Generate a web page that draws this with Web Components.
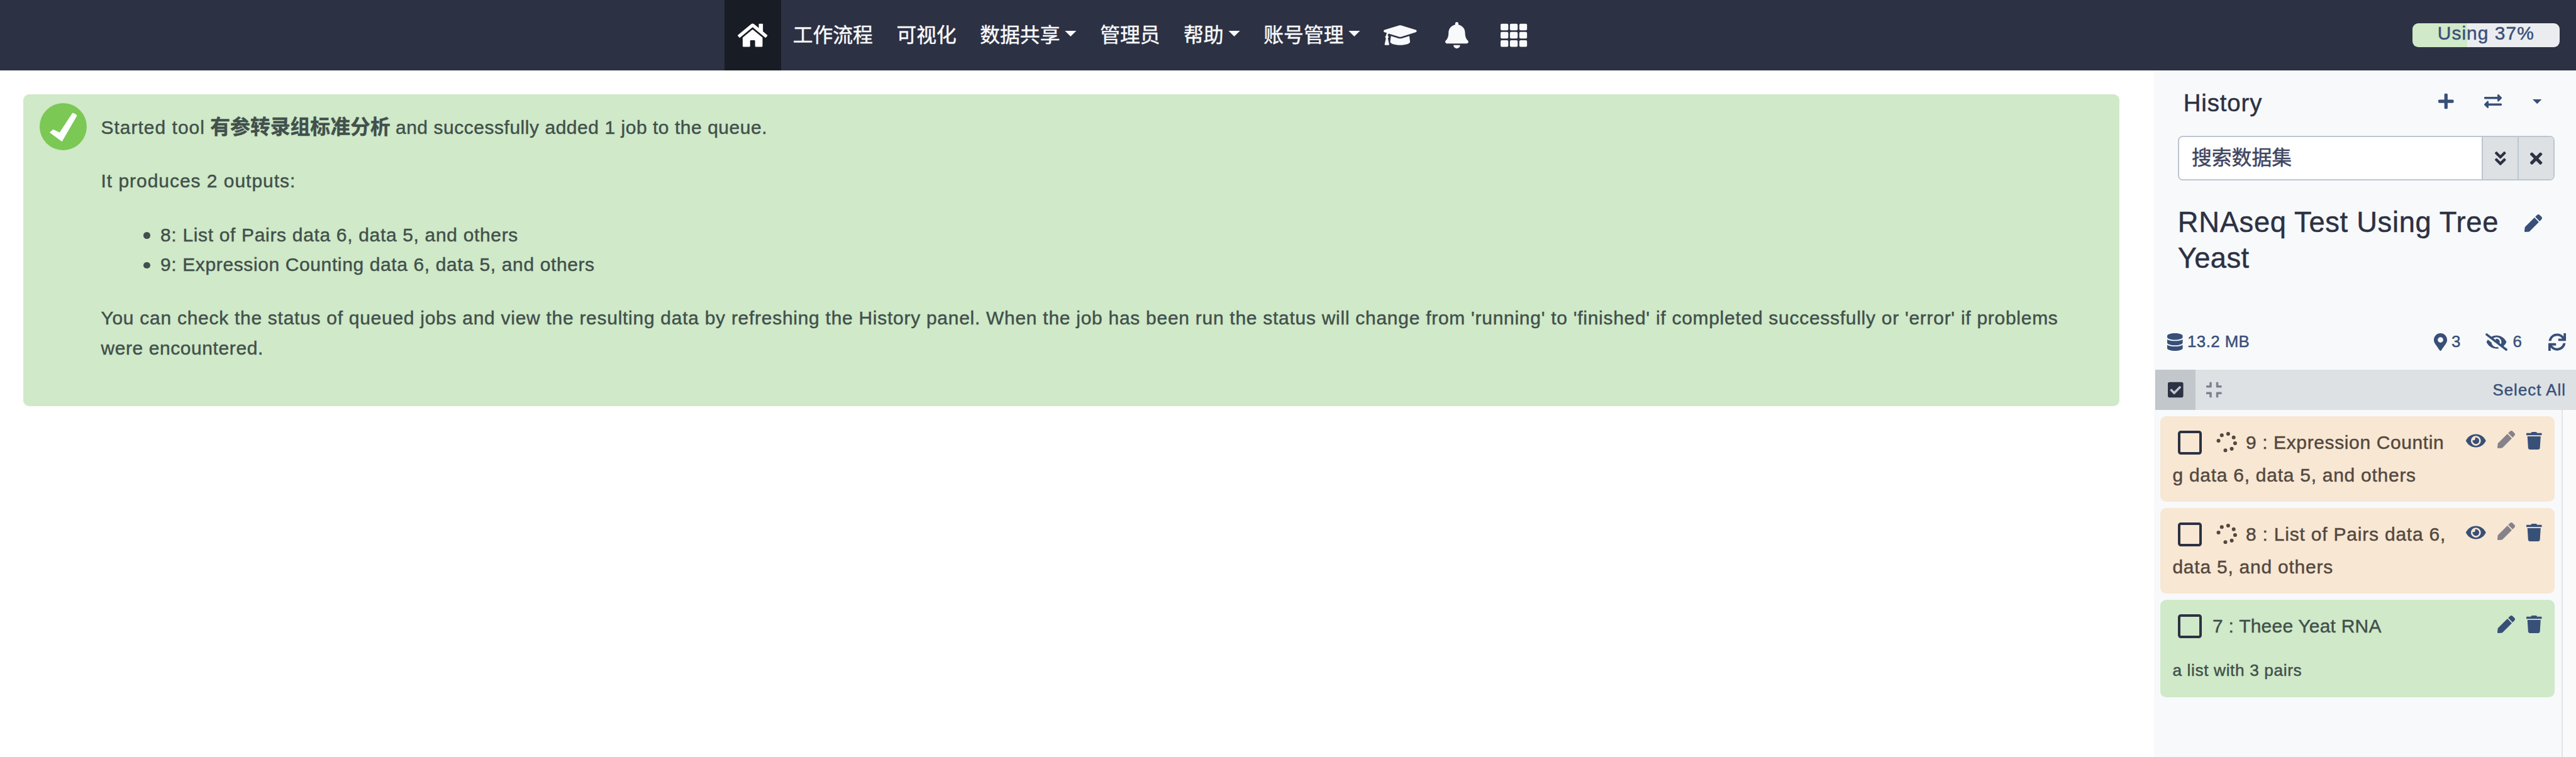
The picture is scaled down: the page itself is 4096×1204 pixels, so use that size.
<!DOCTYPE html>
<html lang="zh-CN">
<head>
<meta charset="utf-8">
<title>Galaxy</title>
<style>
/* 1rem = 100 design pixels */
html{font-size:calc(100vw / 43.76);height:100%}
body{margin:0;height:100%;overflow:hidden;background:#fff;font-family:"Liberation Sans","Noto Sans CJK SC",sans-serif;-webkit-text-stroke:.005rem currentColor}
</style>
</head>
<body>
<galaxy-app></galaxy-app>
<script>
const ICONS = {
home:[576,'M280.37 148.26L96 300.11V464a16 16 0 0 0 16 16l112.06-.29a16 16 0 0 0 15.92-16V368a16 16 0 0 1 16-16h64a16 16 0 0 1 16 16v95.64a16 16 0 0 0 16 16.05L464 480a16 16 0 0 0 16-16V300L295.67 148.26a12.19 12.19 0 0 0-15.3 0zM571.6 251.47L488 182.56V44.05a12 12 0 0 0-12-12h-56a12 12 0 0 0-12 12v72.61L318.47 43a48 48 0 0 0-61 0L4.34 251.47a12 12 0 0 0-1.6 16.9l25.5 31A12 12 0 0 0 45.15 301l235.22-193.74a12.19 12.19 0 0 1 15.3 0L530.9 301a12 12 0 0 0 16.9-1.6l25.5-31a12 12 0 0 0-1.7-16.93z'],
bell:[448,'M224 512c35.32 0 63.97-28.65 63.97-64H160.03c0 35.35 28.65 64 63.97 64zm215.39-149.71c-19.32-20.76-55.47-51.99-55.47-154.29 0-77.7-54.48-139.9-127.94-155.16V32c0-17.67-14.32-32-31.98-32s-31.98 14.33-31.98 32v20.84C118.56 68.1 64.08 130.3 64.08 208c0 102.3-36.15 133.53-55.47 154.29-6 6.45-8.66 14.16-8.61 21.71.11 16.4 12.98 32 32.1 32h383.8c19.12 0 32-15.6 32.1-32 .05-7.55-2.61-15.27-8.61-21.71z'],
cap:[640,'M622.34 153.2L343.4 67.5c-15.2-4.67-31.6-4.67-46.79 0L17.66 153.2c-23.54 7.23-23.54 38.36 0 45.59l48.63 14.94c-10.67 13.19-17.23 29.28-17.88 46.9C38.78 266.15 32 276.11 32 288c0 10.78 5.68 19.85 13.86 25.65L20.33 428.53C18.11 438.52 25.71 448 35.94 448h56.11c10.24 0 17.84-9.48 15.62-19.47L82.14 313.65C90.32 307.85 96 298.78 96 288c0-11.57-6.47-21.25-15.66-26.87.76-15.02 8.44-28.3 20.69-36.72L296.6 284.5c9.06 2.78 26.44 6.25 46.79 0l278.95-85.7c23.55-7.24 23.55-38.36 0-45.6zM352.79 315.09c-28.53 8.76-52.84 3.92-65.59 0l-145.02-44.55L128 384c0 35.35 85.96 64 192 64s192-28.65 192-64l-14.18-113.47-145.03 44.56z'],
grid:[512,[0,181.33,362.66].flatMap(x=>[32,192,352].map(y=>`M${x+24} ${y}h101.33a24 24 0 0 1 24 24v80a24 24 0 0 1-24 24h-101.33a24 24 0 0 1-24-24v-80a24 24 0 0 1 24-24z`)).join('')],
plus:[448,'M416 208H272V64c0-17.67-14.33-32-32-32h-32c-17.67 0-32 14.33-32 32v144H32c-17.67 0-32 14.33-32 32v32c0 17.67 14.33 32 32 32h144v144c0 17.67 14.33 32 32 32h32c17.67 0 32-14.33 32-32V304h144c17.67 0 32-14.33 32-32v-32c0-17.67-14.33-32-32-32z'],
exchange:[512,'M0 168v-16c0-13.255 10.745-24 24-24h360V80c0-21.367 25.899-32.042 40.971-16.971l80 80c9.372 9.373 9.372 24.569 0 33.941l-80 80C409.956 271.982 384 261.456 384 240v-48H24c-13.255 0-24-10.745-24-24zm488 152H128v-48c0-21.314-25.862-32.08-40.971-16.971l-80 80c-9.372 9.373-9.372 24.569 0 33.941l80 80C102.057 463.997 128 453.437 128 432v-48h360c13.255 0 24-10.745 24-24v-16c0-13.255-10.745-24-24-24z'],
down2:[320,'M143 256.3L7 120.3c-9.4-9.4-9.4-24.6 0-33.9l22.6-22.6c9.4-9.4 24.6-9.4 33.9 0l96.4 96.4 96.4-96.4c9.4-9.4 24.6-9.4 33.9 0L313 86.3c9.4 9.4 9.4 24.6 0 33.9l-136 136c-9.4 9.5-24.6 9.5-34 .1zm34 192l136-136c9.4-9.4 9.4-24.6 0-33.9l-22.6-22.6c-9.4-9.4-24.6-9.4-33.9 0L160 352.1l-96.4-96.4c-9.4-9.4-24.6-9.4-33.9 0L7 278.3c-9.4 9.4-9.4 24.6 0 33.9l136 136c9.4 9.5 24.6 9.5 34 .1z'],
times:[352,'M242.72 256l100.07-100.07c12.28-12.28 12.28-32.19 0-44.48l-22.24-22.24c-12.28-12.28-32.19-12.28-44.48 0L176 189.28 75.93 89.21c-12.28-12.28-32.19-12.28-44.48 0L9.21 111.45c-12.28 12.28-12.28 32.19 0 44.48L109.28 256 9.21 356.07c-12.28 12.28-12.28 32.19 0 44.48l22.24 22.24c12.28 12.28 32.2 12.28 44.48 0L176 322.72l100.07 100.07c12.28 12.28 32.2 12.28 44.48 0l22.24-22.24c12.28-12.28 12.28-32.19 0-44.48L242.72 256z'],
pen:[512,'M290.74 93.24l128.02 128.02-277.99 277.99-114.14 12.6C11.35 513.54-1.56 500.62.14 485.34l12.7-114.22 277.9-277.88zm207.2-19.06l-60.11-60.11c-18.75-18.75-49.16-18.75-67.91 0l-56.55 56.55 128.02 128.02 56.55-56.55c18.75-18.76 18.75-49.16 0-67.91z'],
database:[448,'M448 73.143v45.714C448 159.143 347.667 192 224 192S0 159.143 0 118.857V73.143C0 32.857 100.333 0 224 0s224 32.857 224 73.143zM448 176v102.857C448 319.143 347.667 352 224 352S0 319.143 0 278.857V176c48.125 33.143 136.208 48.572 224 48.572S399.874 209.143 448 176zm0 160v102.857C448 479.143 347.667 512 224 512S0 479.143 0 438.857V336c48.125 33.143 136.208 48.572 224 48.572S399.874 369.143 448 336z'],
pin:[384,'M172.268 501.67C26.97 291.031 0 269.413 0 192 0 85.961 85.961 0 192 0s192 85.961 192 192c0 77.413-26.97 99.031-172.268 309.67-9.535 13.774-29.93 13.773-39.464 0zM192 272c44.183 0 80-35.817 80-80s-35.817-80-80-80-80 35.817-80 80 35.817 80 80 80z'],
eyeslash:[640,'M320 400c-75.85 0-137.25-58.71-142.9-133.11L72.2 185.82c-13.79 17.3-26.48 35.59-36.72 55.59a32.35 32.35 0 0 0 0 29.19C89.71 376.41 197.07 448 320 448c26.91 0 52.87-4 77.89-10.46L346 397.39a144.13 144.13 0 0 1-26 2.61zm313.82 58.1l-110.55-85.44a331.25 331.25 0 0 0 81.25-102.07 32.35 32.35 0 0 0 0-29.19C550.29 135.59 442.93 64 320 64a308.15 308.15 0 0 0-147.32 37.7L45.46 3.37A16 16 0 0 0 23 6.18L3.37 31.45A16 16 0 0 0 6.18 53.9l588.36 454.73a16 16 0 0 0 22.46-2.81l19.64-25.27a16 16 0 0 0-2.82-22.45zm-183.72-142l-39.3-30.38A94.75 94.75 0 0 0 416 256a94.76 94.76 0 0 0-121.31-92.21A47.65 47.65 0 0 1 304 192a46.64 46.64 0 0 1-1.54 10l-73.61-56.89A142.31 142.31 0 0 1 320 112a143.92 143.92 0 0 1 144 144c0 21.63-5.29 41.79-13.9 60.11z'],
eye:[576,'M572.52 241.4C518.29 135.59 410.93 64 288 64S57.68 135.64 3.48 241.41a32.35 32.35 0 0 0 0 29.19C57.71 376.41 165.07 448 288 448s230.32-71.64 284.52-177.41a32.35 32.35 0 0 0 0-29.19zM288 400a144 144 0 1 1 144-144 143.93 143.93 0 0 1-144 144zm0-240a95.31 95.31 0 0 0-25.31 3.79 47.85 47.85 0 0 1-66.9 66.9A95.78 95.78 0 1 0 288 160z'],
sync:[512,'M440.65 12.57l4 82.77A247.16 247.16 0 0 0 255.83 8C134.73 8 33.91 94.92 12.29 209.82A12 12 0 0 0 24.09 224h49.05a12 12 0 0 0 11.67-9.26 175.91 175.91 0 0 1 317-56.94l-101.46-4.86a12 12 0 0 0-12.57 12v47.41a12 12 0 0 0 12 12H500a12 12 0 0 0 12-12V12a12 12 0 0 0-12-12h-47.37a12 12 0 0 0-11.98 12.57zM255.83 432a175.61 175.61 0 0 1-146-77.8l101.8 4.87a12 12 0 0 0 12.57-12v-47.4a12 12 0 0 0-12-12H12a12 12 0 0 0-12 12V500a12 12 0 0 0 12 12h47.35a12 12 0 0 0 12-12.6l-4.15-82.57A247.17 247.17 0 0 0 255.83 504c121.11 0 221.93-86.92 243.55-201.82a12 12 0 0 0-11.8-14.18h-49.05a12 12 0 0 0-11.67 9.26A175.86 175.86 0 0 1 255.83 432z'],
check:[448,'M400 480H48c-26.51 0-48-21.49-48-48V80c0-26.51 21.49-48 48-48h352c26.51 0 48 21.49 48 48v352c0 26.51-21.49 48-48 48zm-204.686-98.059l184-184c6.248-6.248 6.248-16.379 0-22.627l-22.627-22.627c-6.248-6.248-16.379-6.249-22.628 0L184 302.745l-70.059-70.059c-6.248-6.248-16.379-6.248-22.628 0l-22.627 22.627c-6.248 6.248-6.248 16.379 0 22.627l104 104c6.249 6.25 16.379 6.25 22.628.001z'],
compress:[448,'M436 192H312c-13.3 0-24-10.7-24-24V44c0-6.6 5.4-12 12-12h40c6.6 0 12 5.4 12 12v84h84c6.6 0 12 5.4 12 12v40c0 6.6-5.4 12-12 12zm-276-24V44c0-6.6-5.4-12-12-12h-40c-6.6 0-12 5.4-12 12v84H12c-6.6 0-12 5.4-12 12v40c0 6.6 5.4 12 12 12h124c13.3 0 24-10.7 24-24zm0 300V344c0-13.3-10.7-24-24-24H12c-6.6 0-12 5.4-12 12v40c0 6.6 5.4 12 12 12h84v84c0 6.6 5.4 12 12 12h40c6.6 0 12-5.4 12-12zm192 0v-84h84c6.6 0 12-5.4 12-12v-40c0-6.6-5.4-12-12-12H312c-13.3 0-24 10.7-24 24v124c0 6.6 5.4 12 12 12h40c6.6 0 12-5.4 12-12z'],
trash:[448,'M432 32H312l-9.4-18.7A24 24 0 0 0 281.1 0H166.8a23.72 23.72 0 0 0-21.4 13.3L136 32H16A16 16 0 0 0 0 48v32a16 16 0 0 0 16 16h416a16 16 0 0 0 16-16V48a16 16 0 0 0-16-16zM53.2 467a48 48 0 0 0 47.9 45h245.8a48 48 0 0 0 47.9-45L416 128H32z'],
spinner:[512,[[9.4,5.7],[20.2,3.3],[29.6,9.3],[32,19.3],[26.3,28.7],[15.5,31.3],[3.8,15]].map(([x,y])=>{const k=512/36,r=46;return `M${x*k-r} ${y*k}a${r} ${r} 0 1 0 ${2*r} 0a${r} ${r} 0 1 0 ${-2*r} 0z`}).join('')]
};

const define = (name, html) => customElements.define(name, class extends HTMLElement {
  constructor(){ super(); this.attachShadow({mode:'open'}).innerHTML = html; }
});

customElements.define('g-icon', class extends HTMLElement {
  connectedCallback(){
    if (this.shadowRoot) return;
    const [w, d] = ICONS[this.getAttribute('name')];
    const s = +(this.getAttribute('size') || 30);
    this.attachShadow({mode:'open'}).innerHTML =
      `<style>:host{display:block;flex:none;width:${s*w/51200}rem;height:${s/100}rem}svg{display:block;width:100%;height:100%;overflow:visible}</style>
       <svg viewBox="0 0 ${w} 512" fill="currentColor"><path d="${d}"/></svg>`;
  }
});

/* text run with tracking given in hundredths of a design pixel */
customElements.define('g-text', class extends HTMLElement {
  connectedCallback(){
    if (this.shadowRoot) return;
    const t = +(this.getAttribute('track') || 0);
    this.attachShadow({mode:'open'}).innerHTML =
      `<style>:host{display:inline-block;white-space:nowrap;letter-spacing:${t/10000}rem}</style><slot></slot>`;
  }
});

define('g-caret', `<style>:host{display:block;flex:none;width:.2rem;height:.1rem;background:currentColor;clip-path:polygon(0 0,100% 0,50% 100%)}</style>`);

define('nav-item', `<style>
:host{display:flex;align-items:center;height:1.2rem;padding:0 .2rem;gap:.08rem;font-size:.34rem;line-height:1.2rem;white-space:nowrap;color:#f8f9fb}
:host([home]){background:#181c24;padding:0 .2265rem;color:#fff}
:host([fixed]){width:.5625rem;justify-content:center}
</style><slot></slot>`);

define('quota-meter', `<style>
:host{display:block;width:2.5rem;height:.4rem;border-radius:.1rem;overflow:hidden;background:linear-gradient(90deg,#d0e9c8 37.2%,#ebecf0 37.2%);color:#385078;font-size:.32rem;line-height:.333rem;text-align:center;white-space:nowrap}
</style><slot></slot>`);

define('mast-head', `<style>
:host{display:flex;align-items:center;height:1.2rem;background:#2c3143;flex:none}
nav{display:flex;margin-left:12.31rem}
quota-meter{margin-left:auto;margin-right:.28rem}
g-caret{margin-bottom:.06rem}
</style>
<nav>
<nav-item home><g-icon name="home" size="45"></g-icon></nav-item>
<nav-item>工作流程</nav-item><nav-item>可视化</nav-item>
<nav-item><span>数据共享</span><g-caret></g-caret></nav-item>
<nav-item>管理员</nav-item>
<nav-item><span>帮助</span><g-caret></g-caret></nav-item>
<nav-item><span>账号管理</span><g-caret></g-caret></nav-item>
<nav-item fixed><g-icon name="cap" size="45"></g-icon></nav-item>
<nav-item fixed><g-icon name="bell" size="45"></g-icon></nav-item>
<nav-item fixed><g-icon name="grid" size="45"></g-icon></nav-item>
</nav>
<quota-meter><g-text track="110">Using 37%</g-text></quota-meter>`);

define('job-message', `<style>
:host{display:flex;box-sizing:border-box;height:5.3rem;border-radius:.1rem;background:#d0e9c8;color:#41504c;font-size:.32rem;line-height:.51rem;padding:0 0 0 .27rem}
svg{flex:none;width:.8rem;height:.8rem;margin-top:.15rem}
.body{margin-left:.245rem;padding-top:.315rem;white-space:nowrap}
p{margin:0 0 .4rem;height:.51rem}
p.long{height:1.02rem}
p.long g-text{display:block}
strong{font-size:.34rem;line-height:0}
ul{margin:0 0 .4rem;padding:0;list-style:none}
li{display:flex;align-items:center;height:.51rem;padding-left:.725rem}
li::before{content:"";width:.115rem;height:.115rem;border-radius:50%;background:currentColor;margin-right:.17rem;margin-top:.02rem}
</style>
<svg viewBox="0 0 80 80"><circle cx="40" cy="40" r="40" fill="#7bc855"/><path d="M17 50l6-5.500 11 5.500 21.500-33c1.500-1 8 2.500 8 4.500L38 65.500z" fill="#fff"/></svg>
<div class="body">
<p><g-text track="110">Started tool</g-text> <strong>有参转录组标准分析</strong> <g-text track="60">and successfully added 1 job to the queue.</g-text></p>
<p><g-text track="106">It produces 2 outputs:</g-text></p>
<ul><li><g-text track="74">8: List of Pairs data 6, data 5, and others</g-text></li><li><g-text track="69">9: Expression Counting data 6, data 5, and others</g-text></li></ul>
<p class="long"><g-text track="80">You can check the status of queued jobs and view the resulting data by refreshing the History panel. When the job has been run the status will change from 'running' to 'finished' if completed successfully or 'error' if problems</g-text><g-text track="65">were encountered.</g-text></p>
</div>`);

define('search-box', `<style>
:host{display:flex;box-sizing:border-box;width:6.4rem;height:.76rem;border:2px solid #bdc6d0;border-radius:.08rem;background:#fff;overflow:hidden;font-size:.34rem;color:#3f4560;line-height:.72rem}
.q{flex:1;padding-left:.21rem}
.b{display:flex;align-items:center;justify-content:center;width:.59rem;border-left:2px solid #bdc6d0;background:#dde1e4;color:#2c3143}
</style><div class="q"><slot></slot></div><div class="b"><g-icon name="down2"></g-icon></div><div class="b"><g-icon name="times"></g-icon></div>`);

define('history-card', `<style>
:host{display:flex;justify-content:space-between;box-sizing:border-box;width:6.7rem;height:1.46rem;border-radius:.1rem;background:#f8e7d3;color:#53483f;padding:.175rem .22rem 0 .205rem;font-size:.32rem;line-height:.55rem;white-space:nowrap}
:host([ok]){background:#d0e9c8;color:#41504c;height:1.66rem}
.line{display:flex;align-items:center}
i{box-sizing:border-box;width:.405rem;height:.405rem;border:4px solid #2c3143;border-radius:.05rem;margin:0 .18rem 0 .095rem}
.acts{display:flex;align-items:center;gap:.195rem;height:.3rem;margin-top:.095rem;color:#385078}
</style><div><div class="line"><i></i><slot name="title"></slot></div><slot name="more"></slot></div><div class="acts"><slot name="acts"></slot></div>`);

define('history-panel', `<style>
:host{display:flex;flex-direction:column;width:7.16rem;box-sizing:border-box;background:#f8f9fb;color:#2c3143;white-space:nowrap;border-left:1px solid #f1f2f5}
.row{display:flex;align-items:center}
.blue{color:#385078}
.head{height:1.05rem;padding:0 .58rem 0 .48rem;justify-content:space-between}
.head h3{margin:.05rem 0 0;font-weight:400;font-size:.41rem;line-height:.6rem}
.head .row{gap:.52rem}
.head g-caret{width:.16rem;height:.08rem}
search-box{margin:.06rem 0 0 .39rem}
.title{display:flex;justify-content:space-between;margin:.4rem .58rem 0 .385rem;height:1.22rem}
.title h2{margin:0;font-weight:400;font-size:.484rem;line-height:.61rem}
.title h2 g-text{display:block}
.title g-icon{margin-top:.17rem}
.stats{margin-top:.65rem;height:.94rem;padding:0 .17rem 0 .21rem;font-size:.276rem;line-height:.94rem}
.stats .size{margin-left:.075rem}
.stats .pin{margin-left:auto}
.stats .n1{margin:0 .43rem 0 .07rem}
.stats .n2{margin:0 .45rem 0 .085rem}
.sel{height:.69rem;background:#dde1e4;padding-right:.17rem;font-size:.275rem;line-height:.69rem;flex:none}
.sel .on{display:flex;align-items:center;justify-content:center;width:.69rem;height:.69rem;background:#c2c7cb}
.sel .compress{color:#808090;margin-left:.18rem}
.sel .all{margin-left:auto}
.listwrap{display:flex;flex:1;min-height:0;background:#fafafb}
.list{display:flex;flex-direction:column;gap:.1rem;width:6.92rem;padding:.1rem 0 0 .09rem;box-sizing:border-box;border-right:2px solid #e1e4e8;background:#f8f9fb}
.grey{color:#86828a;margin-bottom:.04rem}
.l2{display:block}
.small{font-size:.28rem;margin-top:.21rem}
.sp{margin:0 .145rem 0 .06rem}
</style>
<div class="row head"><h3><g-text track="93">History</g-text></h3><div class="row blue"><g-icon name="plus"></g-icon><g-icon name="exchange"></g-icon><g-caret></g-caret></div></div>
<search-box>搜索数据集</search-box>
<div class="title"><h2><g-text track="73">RNAseq Test Using Tree</g-text><g-text track="40">Yeast</g-text></h2><g-icon class="blue" name="pen"></g-icon></div>
<div class="row stats blue"><g-icon name="database"></g-icon><g-text class="size" track="46">13.2 MB</g-text>
<g-icon class="pin" name="pin"></g-icon><span class="n1">3</span><g-icon name="eyeslash"></g-icon><span class="n2">6</span><g-icon name="sync"></g-icon></div>
<div class="row sel"><div class="on"><g-icon name="check"></g-icon></div><g-icon class="compress" name="compress"></g-icon><g-text class="blue all" track="115">Select All</g-text></div>
<div class="listwrap"><div class="list">
<history-card><g-icon class="sp" slot="title" name="spinner" size="36"></g-icon><g-text slot="title" track="69">9 : Expression Countin</g-text><g-text slot="more" class="l2" track="81">g data 6, data 5, and others</g-text>
<g-icon slot="acts" name="eye"></g-icon><g-icon slot="acts" class="grey" name="pen"></g-icon><g-icon slot="acts" name="trash"></g-icon></history-card>
<history-card><g-icon class="sp" slot="title" name="spinner" size="36"></g-icon><g-text slot="title" track="87">8 : List of Pairs data 6,</g-text><g-text slot="more" class="l2" track="84">data 5, and others</g-text>
<g-icon slot="acts" name="eye"></g-icon><g-icon slot="acts" class="grey" name="pen"></g-icon><g-icon slot="acts" name="trash"></g-icon></history-card>
<history-card ok><g-text slot="title" track="27">7 : Theee Yeat RNA</g-text><g-text slot="more" class="l2 small" track="69">a list with 3 pairs</g-text>
<g-icon slot="acts" name="pen"></g-icon><g-icon slot="acts" name="trash"></g-icon></history-card>
</div></div>`);

define('galaxy-app', `<style>
:host{display:flex;flex-direction:column;height:100vh}
.main{display:flex;flex:1;min-height:0}
main{flex:1;padding:.4rem .6rem 0 .4rem}
</style><mast-head></mast-head><div class="main"><main><job-message></job-message></main><history-panel></history-panel></div>`);
</script>
</body>
</html>
